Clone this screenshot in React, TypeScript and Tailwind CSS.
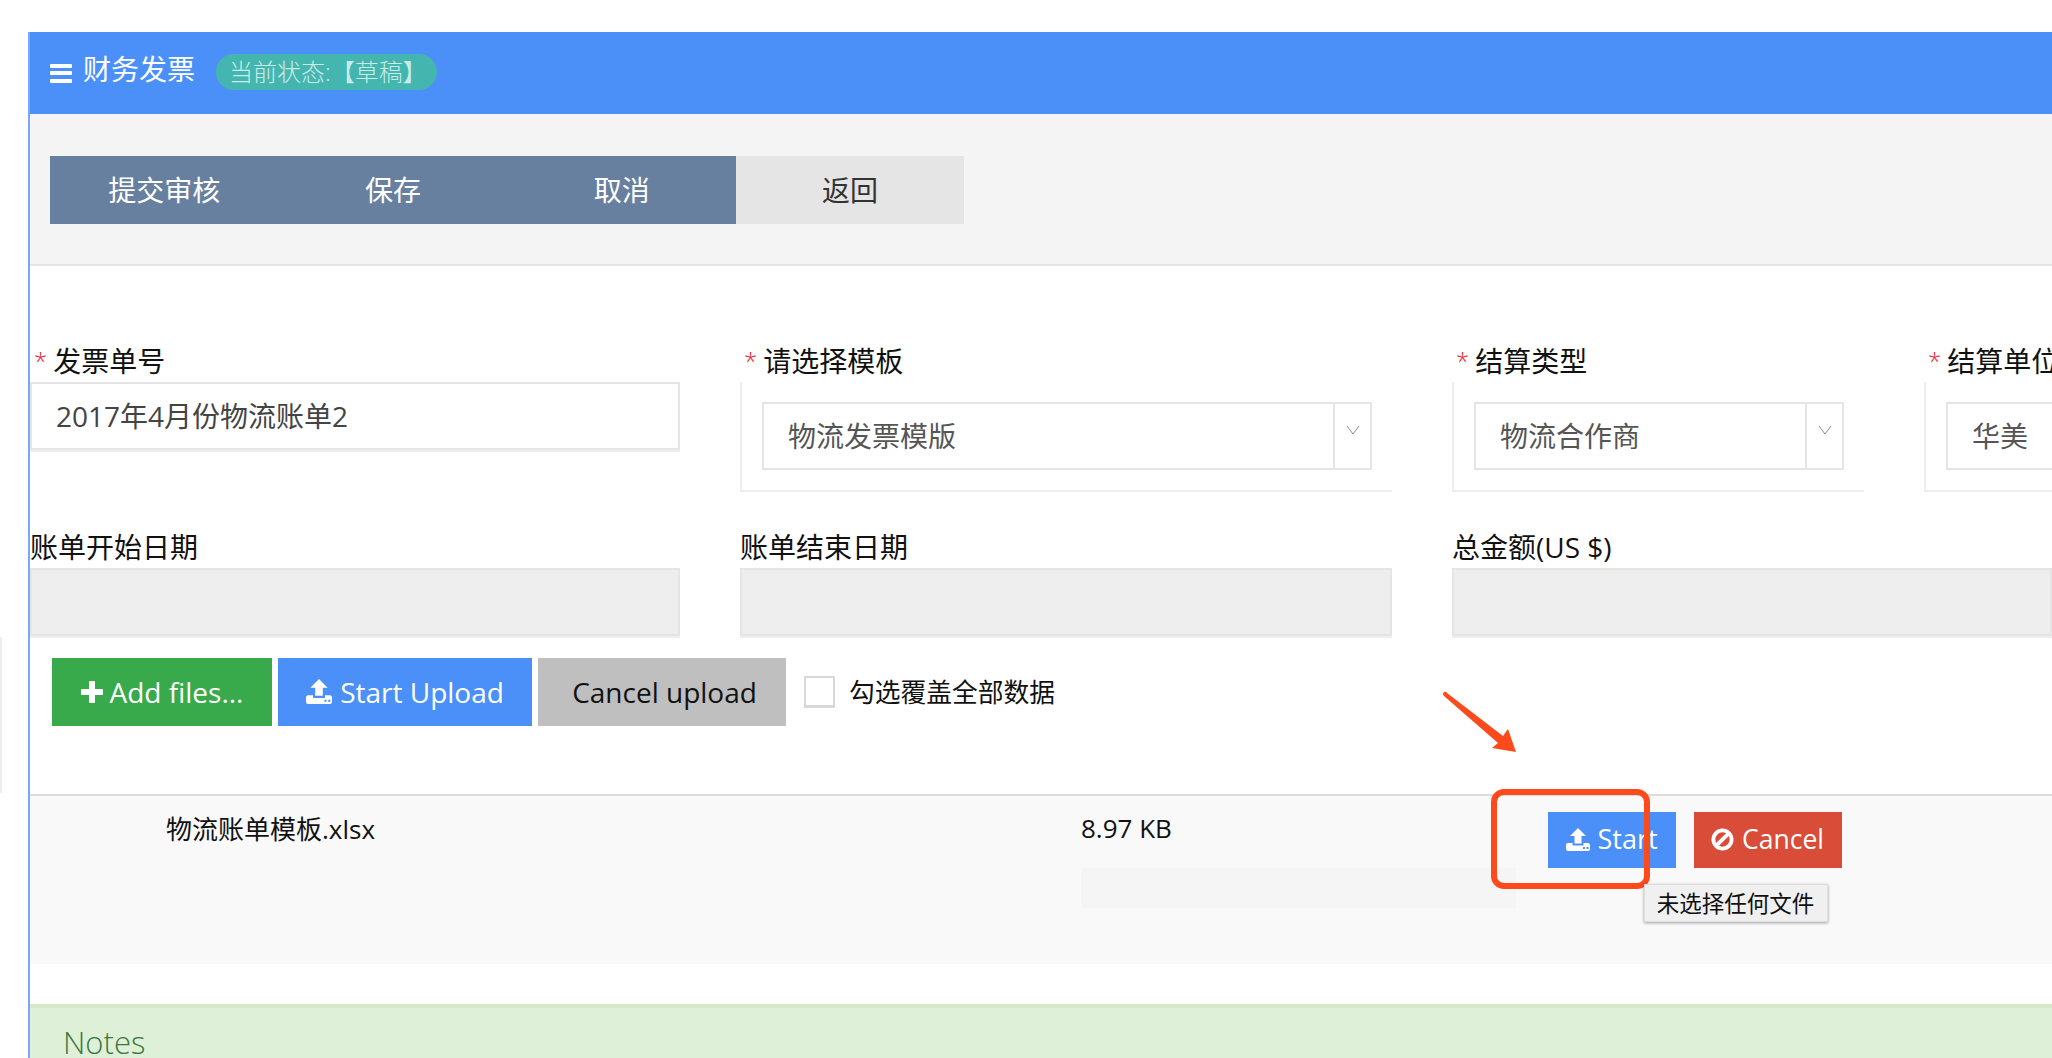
import React from "react";

function UploadIcon({ className }: { className: string }) {
  return (
    <svg viewBox="0 0 24 23" className={className} fill="currentColor">
      <path d="M12 0 L20 8 H15.5 V15.5 H8.5 V8 H4 Z" />
      <path
        fillRule="evenodd"
        d="M2 15 H6.5 V17.5 H17.5 V15 H22 Q24 15 24 17 V21 Q24 23 22 23 H2 Q0 23 0 21 V17 Q0 15 2 15 Z M17 19 V21 H19 V19 Z M20.5 19 V21 H22.5 V19 Z"
      />
    </svg>
  );
}

function Label({ text, required }: { text: string; required?: boolean }) {
  return (
    <div className="h-[37px] flex items-center pb-[5px] text-[28px] leading-[32px] text-[#111] whitespace-nowrap">
      {required && <span className="text-[#f0202c] text-[24px] ml-[4px] mr-[6px] font-light">*</span>}
      {text}
    </div>
  );
}

function Select({ value, arrow = true, wide }: { value: string; arrow?: boolean; wide?: string }) {
  return (
    <div className="h-[110px] border-l-2 border-b-[2px] border-[#eeeeee] pl-[20px] pt-[20px]">
      <div className={`h-[68px] border-2 border-[#e5e5e5] flex ${wide ?? ""}`}>
        <div className="flex-1 flex items-center pl-[24px] pb-[1px] text-[28px] text-[#555]">{value}</div>
        {arrow && (
          <div className="w-[37px] border-l-2 border-[#e5e5e5] flex justify-center pt-[21px]">
            <svg viewBox="0 0 14 10" className="w-[14px] h-[10px]" fill="none" stroke="#8a8a8a" strokeWidth="1">
              <path d="M1 1 L7 9 L13 1" />
            </svg>
          </div>
        )}
      </div>
    </div>
  );
}

function ReadOnlyBox() {
  return <div className="h-[68px] mb-[2px] bg-[#eeeeee] border-2 border-[#e5e5e5] shadow-[0_2px_0_#eeeeee]" />;
}

export default function App() {
  return (
    <div className="relative w-[2052px] h-[1058px] overflow-hidden bg-white pt-[32px] pl-[28px] font-['Open_Sans','Noto_Sans_CJK_SC',sans-serif]">
      <div className="absolute left-0 top-[637px] h-[156px] w-[2px] bg-[#eeeeee]" />
      <div className="h-[1026px] border-l-2 border-[#7aa7fb] flex flex-col">
        {/* Header */}
        <div className="h-[82px] shrink-0 bg-[#4b8ff9] flex items-center pl-[20px] text-white">
          <div className="w-[22px] h-[19px] flex flex-col justify-between mr-[11px]">
            <div className="h-[4px] bg-white rounded-[1px]" />
            <div className="h-[4px] bg-white rounded-[1px]" />
            <div className="h-[4px] bg-white rounded-[1px]" />
          </div>
          <span className="text-[28px] leading-none mb-[8px]">财务发票</span>
          <span className="ml-[21px] h-[36px] w-[221px] rounded-[18px] bg-[#45b6af] text-[#c9ece8] text-[24px] font-light flex items-center pl-[13px] whitespace-nowrap mb-[2px]">
            当前状态:【草稿】
          </span>
        </div>

        {/* Toolbar */}
        <div className="h-[152px] shrink-0 bg-[#f4f4f4] border-b-2 border-[#e5e5e5] flex pl-[20px] pt-[42px]">
          {["提交审核", "保存", "取消"].map((t) => (
            <div key={t} className="w-[228.7px] h-[68px] bg-[#67809f] text-white text-[28px] flex items-center justify-center">
              {t}
            </div>
          ))}
          <div className="w-[228px] h-[68px] bg-[#e5e5e5] text-[#333] text-[28px] flex items-center justify-center">返回</div>
        </div>

        {/* Form */}
        <div className="shrink-0 pt-[79px] grid grid-cols-[650px_652px_412px_600px] gap-x-[60px]">
          <div>
            <Label text="发票单号" required />
            <div className="h-[68px] border-2 border-[#e5e5e5] shadow-[0_2px_0_#eeeeee] flex items-center pl-[24px] pb-[1px] text-[28px] text-[#444]">
              2017年4月份物流账单2
            </div>
          </div>
          <div>
            <Label text="请选择模板" required />
            <Select value="物流发票模版" wide="w-[610px]" />
          </div>
          <div>
            <Label text="结算类型" required />
            <Select value="物流合作商" wide="w-[370px]" />
          </div>
          <div>
            <Label text="结算单位" required />
            <Select value="华美" arrow={false} />
          </div>
        </div>
        <div className="shrink-0 pt-[39px] grid grid-cols-[650px_652px_1fr] gap-x-[60px]">
          <div>
            <Label text="账单开始日期" />
            <ReadOnlyBox />
          </div>
          <div>
            <Label text="账单结束日期" />
            <ReadOnlyBox />
          </div>
          <div>
            <Label text="总金额(US $)" />
            <ReadOnlyBox />
          </div>
        </div>

        {/* Upload buttons */}
        <div className="shrink-0 mt-[20px] ml-[22px] flex items-center text-[28px] h-[68px]">
          <div className="w-[220px] h-[68px] bg-[#38aa4c] text-white flex items-center justify-center gap-[7px] pb-[1px]">
            <svg viewBox="0 0 22 22" className="w-[22px] h-[22px]" fill="currentColor">
              <path d="M8 1 a1 1 0 0 1 1 -1 h4 a1 1 0 0 1 1 1 v7 h7 a1 1 0 0 1 1 1 v4 a1 1 0 0 1 -1 1 h-7 v7 a1 1 0 0 1 -1 1 h-4 a1 1 0 0 1 -1 -1 v-7 h-7 a1 1 0 0 1 -1 -1 v-4 a1 1 0 0 1 1 -1 h7 Z" />
            </svg>
            Add files...
          </div>
          <div className="ml-[6px] w-[254px] h-[68px] bg-[#4b8ff9] text-white flex items-center justify-center gap-[8px] pb-[1px]">
            <UploadIcon className="w-[26px] h-[25px]" />
            Start Upload
          </div>
          <div className="ml-[6px] w-[248px] h-[68px] bg-[#bfbfbf] text-[#111] flex items-center justify-center pl-[5px] pb-[1px]">Cancel upload</div>
          <div className="ml-[18px] w-[31px] h-[32px] bg-white border-2 border-b-[3px] border-[#d8d8d8]" />
          <span className="ml-[14px] text-[25.75px] text-[#111] whitespace-nowrap">勾选覆盖全部数据</span>
        </div>

        {/* File row */}
        <div className="shrink-0 mt-[68px] h-[170px] bg-[#f9f9f9] border-t-2 border-[#dddddd] flex">
          <div className="w-[1051px] pl-[136px] pt-[15px] text-[26px] leading-[36px] text-[#111] whitespace-nowrap">物流账单模板.xlsx</div>
          <div className="w-[435px] pt-[13px]">
            <div className="text-[26px] leading-[38px] text-[#111]">8.97 KB</div>
            <div className="h-[40px] mt-[21px] bg-[#f5f5f5]" />
          </div>
          <div className="ml-[32px] pt-[16px] flex items-start text-[27px] text-white">
            <div className="w-[128px] h-[56px] bg-[#4b8ff9] flex items-center justify-center gap-[7px] pb-[1px]">
              <UploadIcon className="w-[24px] h-[23px]" />
              Start
            </div>
            <div className="ml-[18px] w-[148px] h-[56px] bg-[#d94c38] flex items-center justify-center gap-[8px] text-[26.5px] pb-[1px] pr-[1px]">
              <svg viewBox="0 0 24 24" className="w-[23px] h-[23px]" fill="none" stroke="currentColor" strokeWidth="4">
                <circle cx="12" cy="12" r="9.5" />
                <path d="M5.5 18.5 L18.5 5.5" />
              </svg>
              Cancel
            </div>
          </div>
        </div>

        {/* Notes */}
        <div className="shrink-0 mt-[40px] flex-1 border-t-4 border-[#d6e9c6] bg-[#dff0d8] pl-[33px] pt-[14px] text-[31px] leading-[40px] font-light text-[#3c763d]">
          Notes
        </div>
      </div>

      {/* Annotations */}
      <svg viewBox="0 0 80 70" className="absolute left-[1442px] top-[690px] w-[80px] h-[70px]" fill="#fd4a1c">
        <path d="M2 2 Q4 1 5 3 L61 46 L66 39 L74 62 L50 58 L56 53 L2 6 Q0 4 2 2 Z" />
      </svg>
      <div className="absolute left-[1491px] top-[789px] w-[159px] h-[100px] border-[6px] border-[#fd4a1c] rounded-[13px]" />
      <div className="absolute left-[1644px] top-[884px] w-[184px] h-[38px] bg-[#f0f0f0] border border-[#dcdcdc] shadow-[0_1px_3px_rgba(0,0,0,0.35)] flex items-center justify-center text-[22.5px] text-[#111] whitespace-nowrap font-['Noto_Sans_CJK_SC',sans-serif] pr-[1px]">
        未选择任何文件
      </div>
    </div>
  );
}
